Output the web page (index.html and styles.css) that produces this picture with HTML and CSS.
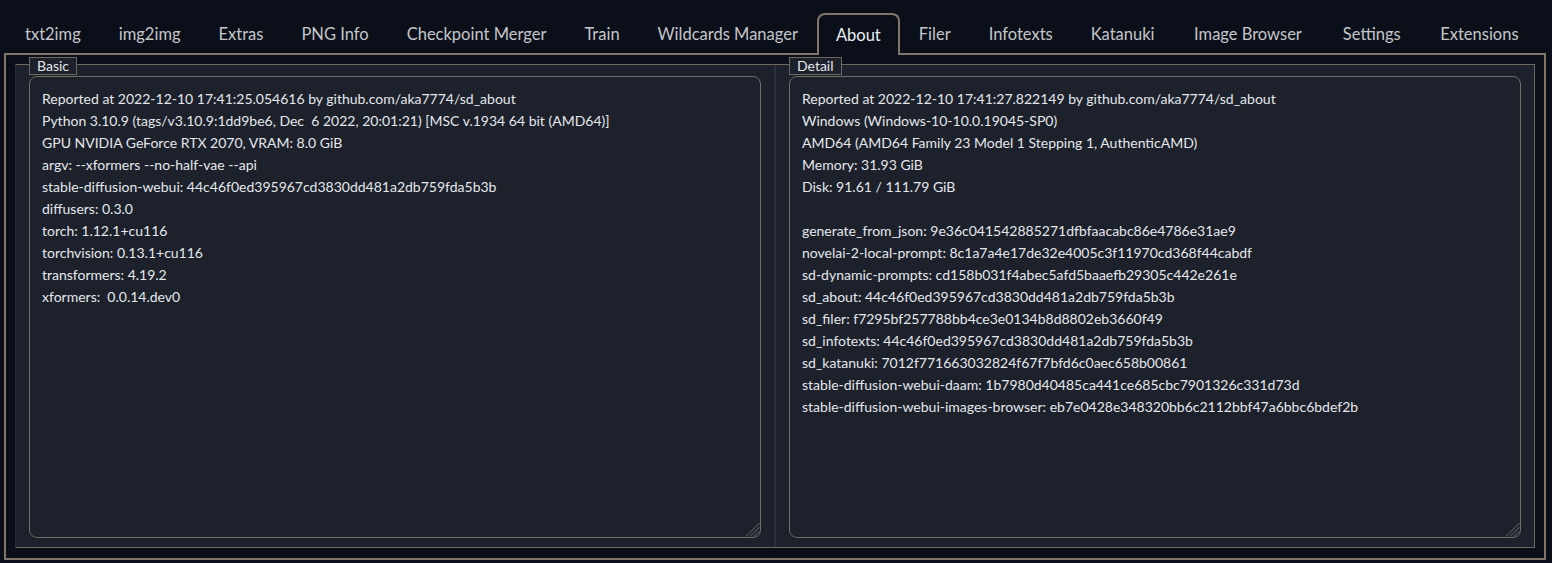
FILE: index.html
```html
<!DOCTYPE html>
<html>
<head>
<meta charset="utf-8">
<link rel="stylesheet" href="styles.css">
</head>
<body>
<nav class="tabs">
  <div class="tab">txt2img</div>
  <div class="tab">img2img</div>
  <div class="tab">Extras</div>
  <div class="tab">PNG Info</div>
  <div class="tab">Checkpoint Merger</div>
  <div class="tab">Train</div>
  <div class="tab">Wildcards Manager</div>
  <div class="tab active">About</div>
  <div class="tab">Filer</div>
  <div class="tab">Infotexts</div>
  <div class="tab">Katanuki</div>
  <div class="tab wide">Image Browser</div>
  <div class="tab wide">Settings</div>
  <div class="tab">Extensions</div>
</nav>
<main class="panel">
  <div class="group">
    <section class="col">
      <span class="legend">Basic</span>
      <div class="box">
        <div class="lines">
          <div>Reported at 2022-12-10 17:41:25.054616 by github.com/aka7774/sd_about</div>
          <div>Python 3.10.9 (tags/v3.10.9:1dd9be6, Dec&nbsp; 6 2022, 20:01:21) [MSC v.1934 64 bit (AMD64)]</div>
          <div>GPU NVIDIA GeForce RTX 2070, VRAM: 8.0 GiB</div>
          <div>argv: --xformers --no-half-vae --api</div>
          <div>stable-diffusion-webui: 44c46f0ed395967cd3830dd481a2db759fda5b3b</div>
          <div>diffusers: 0.3.0</div>
          <div>torch: 1.12.1+cu116</div>
          <div>torchvision: 0.13.1+cu116</div>
          <div>transformers: 4.19.2</div>
          <div>xformers:&nbsp; 0.0.14.dev0</div>
        </div>
        <svg class="grip" width="16" height="16" viewBox="0 0 16 16"><path d="M2 15.5L15.5 2M6 15.5L15.5 6M10 15.5L15.5 10" stroke="#6f6f6f" stroke-width="1"/></svg>
      </div>
    </section>
    <div class="divider"></div>
    <section class="col">
      <span class="legend">Detail</span>
      <div class="box">
        <div class="lines">
          <div>Reported at 2022-12-10 17:41:27.822149 by github.com/aka7774/sd_about</div>
          <div>Windows (Windows-10-10.0.19045-SP0)</div>
          <div>AMD64 (AMD64 Family 23 Model 1 Stepping 1, AuthenticAMD)</div>
          <div>Memory: 31.93 GiB</div>
          <div>Disk: 91.61 / 111.79 GiB</div>
          <div class="blank"></div>
          <div>generate_from_json: 9e36c041542885271dfbfaacabc86e4786e31ae9</div>
          <div>novelai-2-local-prompt: 8c1a7a4e17de32e4005c3f11970cd368f44cabdf</div>
          <div>sd-dynamic-prompts: cd158b031f4abec5afd5baaefb29305c442e261e</div>
          <div>sd_about: 44c46f0ed395967cd3830dd481a2db759fda5b3b</div>
          <div>sd_filer: f7295bf257788bb4ce3e0134b8d8802eb3660f49</div>
          <div>sd_infotexts: 44c46f0ed395967cd3830dd481a2db759fda5b3b</div>
          <div>sd_katanuki: 7012f771663032824f67f7bfd6c0aec658b00861</div>
          <div>stable-diffusion-webui-daam: 1b7980d40485ca441ce685cbc7901326c331d73d</div>
          <div>stable-diffusion-webui-images-browser: eb7e0428e348320bb6c2112bbf47a6bbc6bdef2b</div>
        </div>
        <svg class="grip" width="16" height="16" viewBox="0 0 16 16"><path d="M2 15.5L15.5 2M6 15.5L15.5 6M10 15.5L15.5 10" stroke="#6f6f6f" stroke-width="1"/></svg>
      </div>
    </section>
  </div>
</main>
</body>
</html>
```
FILE: styles.css
```css
* { box-sizing: border-box; }
html, body { margin: 0; padding: 0; }
body {
  background: #0b0f19;
  font-family: Lato, "Liberation Sans", sans-serif;
  color: #e5e7eb;
  height: 563px;
  overflow: hidden;
}
.tabs {
  display: flex;
  align-items: flex-end;
  height: 53px;
  padding-left: 6px;
  position: relative;
  z-index: 2;
}
.tab {
  height: 40px;
  line-height: 42px;
  padding: 0 19px;
  font-size: 16.5px;
  color: #c4c6ca;
  white-space: nowrap;
}
.tab.wide {
  padding: 0 20.5px;
}
.tab.active {
  height: 42px;
  margin-bottom: -2px;
  padding: 0 17px;
  line-height: 40px;
  border: 2px solid #80776a;
  border-bottom: none;
  border-radius: 8px 8px 0 0;
  background: #0b0f19;
  color: #eceff3;
}
.panel {
  margin: 0 6px 0 4px;
  height: 507px;
  border: 2px solid #80776a;
  padding: 9px 9px 9px 9px;
}
.group {
  display: flex;
  height: 484px;
  background: #1c212b;
  border-top: 1px solid #6e675d;
  border-right: 1px solid #6e675d;
  border-bottom: 1px solid #6e675d;
  border-left: 1px solid #262c37;
}
.col {
  flex: 1;
  position: relative;
  padding: 11px 13px 9px 13px;
  display: flex;
}
.divider {
  width: 2px;
  background: #2a3140;
}
.legend {
  position: absolute;
  top: -8px;
  left: 13px;
  height: 18px;
  line-height: 16px;
  padding: 0 7px;
  border: 1px solid #6e675d;
  background: #1c212b;
  font-size: 14px;
  color: #e5e7eb;
}
.box {
  flex: 1;
  position: relative;
  border: 1px solid #6f6c68;
  border-radius: 8px;
  padding: 11px 12px;
  font-size: 14px;
  line-height: 22px;
}
.blank { height: 22px; }
.grip {
  position: absolute;
  right: 0;
  bottom: 0;
}
```
